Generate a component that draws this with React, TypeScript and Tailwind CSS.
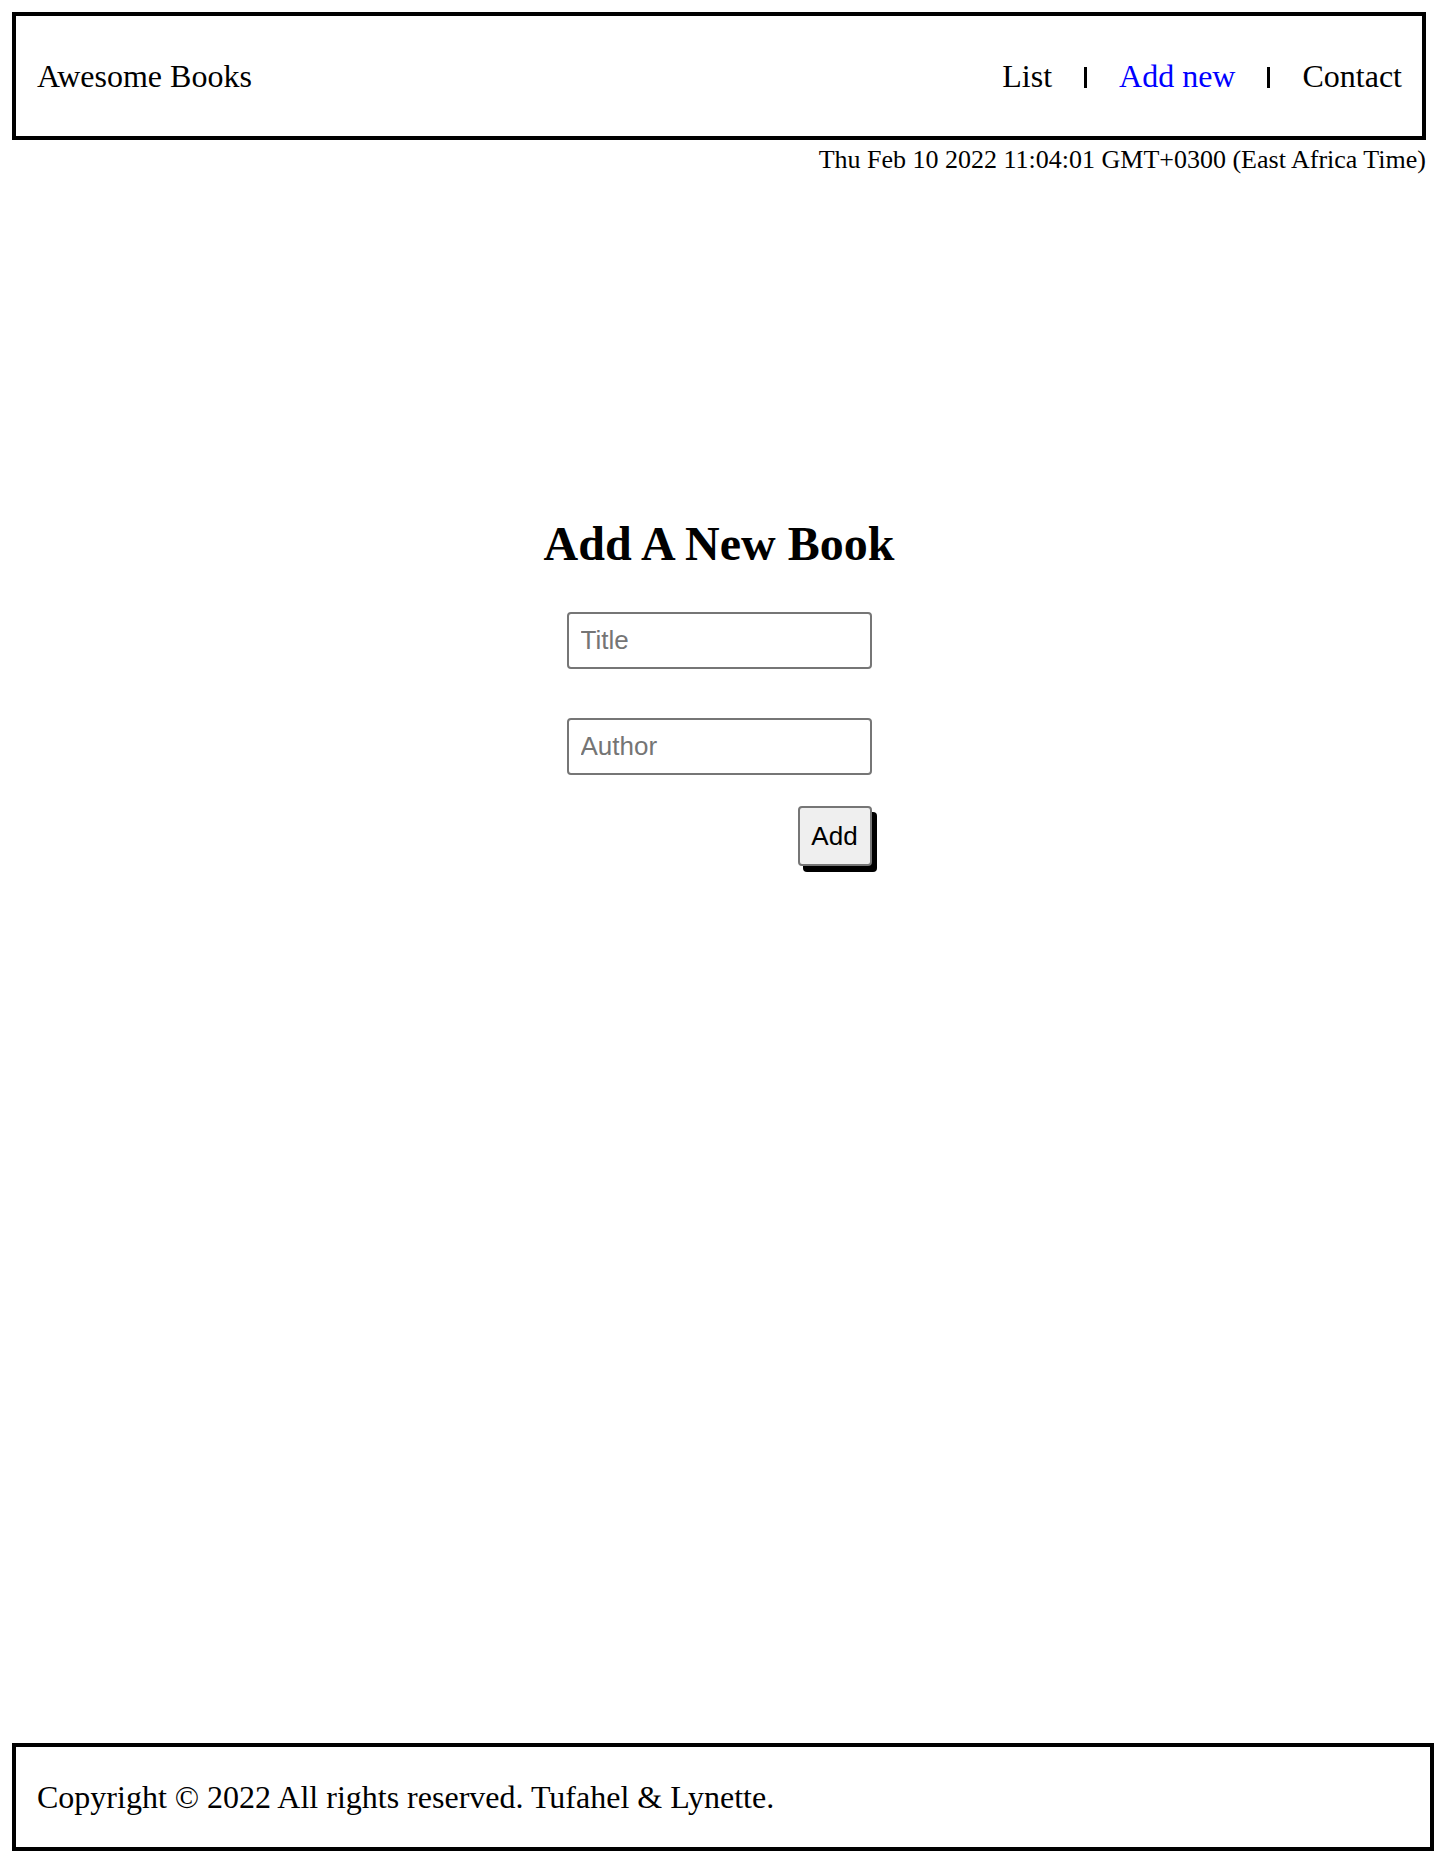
import { useState } from "react";

const navItems = [
  { label: "List", active: false },
  { label: "Add new", active: true },
  { label: "Contact", active: false },
];

const App = () => {
  const [title, setTitle] = useState("");
  const [author, setAuthor] = useState("");

  return (
    <div className="min-h-[1874px] flex flex-col bg-white text-black font-['Liberation_Serif','Times_New_Roman',serif]">
      {/* Header */}
      <header className="mt-[12px] ml-[12px] w-[1414px] h-[128px] border-4 border-black flex items-center justify-between pl-[21px] pr-[20px] text-[32px] leading-[38px]">
        <span>Awesome Books</span>
        <nav className="flex items-center gap-[32px]">
          {navItems.map((item, index) => (
            <div key={item.label} className="flex items-center gap-[32px]">
              {index > 0 && <span className="block w-[3px] h-[21px] mt-[2px] bg-black" />}
              <a href="#" className={item.active ? "text-[#0000ff]" : "text-black"}>
                {item.label}
              </a>
            </div>
          ))}
        </nav>
      </header>

      <div className="ml-[12px] w-[1414px] mt-[5px] text-right text-[26px] leading-[30px]">
        Thu Feb 10 2022 11:04:01 GMT+0300 (East Africa Time)
      </div>

      {/* Add form */}
      <main className="flex-1 ml-[12px] w-[1414px] flex flex-col items-center">
        <h1 className="mt-[342px] text-[48px] leading-[53px] font-bold">Add A New Book</h1>
        <form
          className="mt-[42px] w-[305px] flex flex-col items-end font-['Liberation_Sans',Arial,sans-serif]"
          onSubmit={(e) => e.preventDefault()}
        >
          <input
            type="text"
            value={title}
            onChange={(e) => setTitle(e.target.value)}
            placeholder="Title"
            className="w-[305px] h-[57px] border-2 border-[#767676] rounded-[4px] pl-[12px] text-[26px] placeholder:text-[#757575] outline-none"
          />
          <input
            type="text"
            value={author}
            onChange={(e) => setAuthor(e.target.value)}
            placeholder="Author"
            className="mt-[49px] w-[305px] h-[57px] border-2 border-[#767676] rounded-[4px] pl-[12px] text-[26px] placeholder:text-[#757575] outline-none"
          />
          <button
            type="submit"
            className="mt-[31px] w-[74px] h-[60px] bg-[#efefef] border-2 border-[#767676] rounded-[4px] text-[26px] shadow-[5px_6px_0_#000]"
          >
            Add
          </button>
        </form>
      </main>

      {/* Footer */}
      <footer className="mb-[23px] ml-[12px] w-[1422px] h-[108px] border-4 border-black flex items-center pl-[21px] text-[32px]">
        Copyright © 2022 All rights reserved. Tufahel &amp; Lynette.
      </footer>
    </div>
  );
};

export default App;
